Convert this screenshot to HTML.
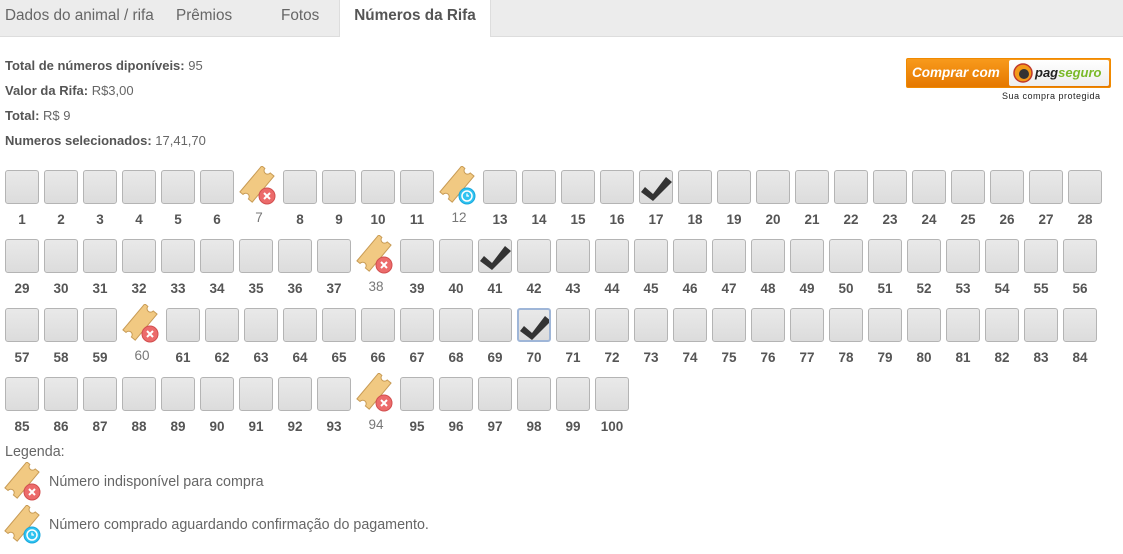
<!DOCTYPE html>
<html><head><meta charset="utf-8">
<style>
*{box-sizing:border-box;margin:0;padding:0}
body{width:1123px;height:554px;background:#fff;font-family:"Liberation Sans",Arial,sans-serif;color:#555;position:relative;overflow:hidden}
.tabs{position:absolute;left:0;top:0;width:1123px;height:37px;background:#ececec;border-bottom:1px solid #ddd}
.tab{position:absolute;top:0;height:36px;line-height:31px;font-size:15.3px;color:#666}
.tab.act{background:#fff;height:37px;border-left:1px solid #ddd;border-right:1px solid #ddd;font-weight:bold;color:#555}
.info{position:absolute;left:5px;font-size:13px;color:#666}
.info b{color:#555}
.row{position:absolute;left:5px;display:flex}
.c{width:39px;height:60px;position:relative}
.c .b{width:34px;height:34px;border:1px solid #b4b4b4;border-radius:3px;background:linear-gradient(#e9e9e9,#dcdcdc)}
.c .b.s{border:2px solid #9fb6d8}
.c span{position:absolute;left:0;width:34px;top:42px;text-align:center;font-weight:bold;font-size:13.5px;color:#555}
.t{width:44px;height:60px;position:relative}
.t svg{position:absolute;left:0;top:-4px}
.t span{position:absolute;left:0;width:40px;top:40px;text-align:center;font-size:13.5px;color:#777}
.leg{position:absolute;left:5px;font-size:14.3px;color:#666}
</style></head><body>
<svg width="0" height="0" style="position:absolute">
<defs>
<g id="tk"><g transform="rotate(-50 18 18)"><path d="M1 10 H35 V14 a3 3 0 0 0 0 7 V26 H1 V21 a3 3 0 0 0 0-7 Z" fill="#f1c982" stroke="#c89b55" stroke-width="1"/></g></g>
<g id="x"><circle cx="28" cy="30" r="8" fill="#ec6b6b" stroke="#d24f4f"/><path d="M25 27 L31 33 M31 27 L25 33" stroke="#fff" stroke-width="2"/></g>
<g id="k"><circle cx="28" cy="30" r="8" fill="#2fc3f0" stroke="#1aa8dd"/><circle cx="28" cy="30" r="5" fill="none" stroke="#fff" stroke-width="1.5"/><path d="M28 27.5 V30 H30" stroke="#fff" stroke-width="1.3" fill="none"/></g>
<g id="ck"><path d="M5 16 L13 23 L26 6 L32 11 L13 30 L1 21 Z" fill="#333"/></g>
</defs></svg>

<div class="tabs">
<div class="tab" style="left:5px">Dados do animal / rifa</div>
<div class="tab" style="left:176px">Prêmios</div>
<div class="tab" style="left:281px">Fotos</div>
<div class="tab act" style="left:339px;width:152px;text-align:center">Números da Rifa</div>
</div>

<div class="info" style="top:58px"><b>Total de números diponíveis:</b> 95</div>
<div class="info" style="top:83px"><b>Valor da Rifa:</b> R$3,00</div>
<div class="info" style="top:108px"><b>Total:</b> R$ 9</div>
<div class="info" style="top:133px"><b>Numeros selecionados:</b> 17,41,70</div>

<div style="position:absolute;left:906px;top:58px;width:205px;height:30px;border:1px solid #f08a00;border-radius:2px;background:linear-gradient(#f89a1c,#e57800)">
<div style="position:absolute;left:5px;top:6px;color:#fff;font-weight:bold;font-style:italic;font-size:13.5px">Comprar com</div>
<div style="position:absolute;left:102px;top:1px;width:100px;height:26px;background:linear-gradient(#fff,#eee);border-radius:2px">
<svg width="20" height="20" style="position:absolute;left:4px;top:3px"><circle cx="10" cy="10" r="9" fill="#f39a1a" stroke="#c0392b" stroke-width="1.5"/><circle cx="11" cy="11" r="5" fill="#333"/></svg>
<span style="position:absolute;left:26px;top:5px;font-size:13px;font-weight:bold;font-style:italic;color:#222">pag<span style="color:#7ab929">seguro</span></span></div>
</div>
<div style="position:absolute;left:1002px;top:91px;font-size:9px;color:#222;letter-spacing:0.5px">Sua compra protegida</div>

<div class="row" style="top:170px">
<div class="c"><div class="b"></div><span>1</span></div><div class="c"><div class="b"></div><span>2</span></div><div class="c"><div class="b"></div><span>3</span></div><div class="c"><div class="b"></div><span>4</span></div><div class="c"><div class="b"></div><span>5</span></div><div class="c"><div class="b"></div><span>6</span></div>
<div class="t"><svg width="40" height="40"><use href="#tk"/><use href="#x"/></svg><span>7</span></div>
<div class="c"><div class="b"></div><span>8</span></div><div class="c"><div class="b"></div><span>9</span></div><div class="c"><div class="b"></div><span>10</span></div><div class="c"><div class="b"></div><span>11</span></div>
<div class="t"><svg width="40" height="40"><use href="#tk"/><use href="#k"/></svg><span>12</span></div>
<div class="c"><div class="b"></div><span>13</span></div><div class="c"><div class="b"></div><span>14</span></div><div class="c"><div class="b"></div><span>15</span></div><div class="c"><div class="b"></div><span>16</span></div>
<div class="c"><div class="b"><svg width="32" height="32"><use href="#ck"/></svg></div><span>17</span></div>
<div class="c"><div class="b"></div><span>18</span></div><div class="c"><div class="b"></div><span>19</span></div><div class="c"><div class="b"></div><span>20</span></div><div class="c"><div class="b"></div><span>21</span></div><div class="c"><div class="b"></div><span>22</span></div><div class="c"><div class="b"></div><span>23</span></div><div class="c"><div class="b"></div><span>24</span></div><div class="c"><div class="b"></div><span>25</span></div><div class="c"><div class="b"></div><span>26</span></div><div class="c"><div class="b"></div><span>27</span></div><div class="c"><div class="b"></div><span>28</span></div>
</div>

<div class="row" style="top:239px">
<div class="c"><div class="b"></div><span>29</span></div><div class="c"><div class="b"></div><span>30</span></div><div class="c"><div class="b"></div><span>31</span></div><div class="c"><div class="b"></div><span>32</span></div><div class="c"><div class="b"></div><span>33</span></div><div class="c"><div class="b"></div><span>34</span></div><div class="c"><div class="b"></div><span>35</span></div><div class="c"><div class="b"></div><span>36</span></div><div class="c"><div class="b"></div><span>37</span></div>
<div class="t"><svg width="40" height="40"><use href="#tk"/><use href="#x"/></svg><span>38</span></div>
<div class="c"><div class="b"></div><span>39</span></div><div class="c"><div class="b"></div><span>40</span></div>
<div class="c"><div class="b"><svg width="32" height="32"><use href="#ck"/></svg></div><span>41</span></div>
<div class="c"><div class="b"></div><span>42</span></div><div class="c"><div class="b"></div><span>43</span></div><div class="c"><div class="b"></div><span>44</span></div><div class="c"><div class="b"></div><span>45</span></div><div class="c"><div class="b"></div><span>46</span></div><div class="c"><div class="b"></div><span>47</span></div><div class="c"><div class="b"></div><span>48</span></div><div class="c"><div class="b"></div><span>49</span></div><div class="c"><div class="b"></div><span>50</span></div><div class="c"><div class="b"></div><span>51</span></div><div class="c"><div class="b"></div><span>52</span></div><div class="c"><div class="b"></div><span>53</span></div><div class="c"><div class="b"></div><span>54</span></div><div class="c"><div class="b"></div><span>55</span></div><div class="c"><div class="b"></div><span>56</span></div>
</div>

<div class="row" style="top:308px">
<div class="c"><div class="b"></div><span>57</span></div><div class="c"><div class="b"></div><span>58</span></div><div class="c"><div class="b"></div><span>59</span></div>
<div class="t"><svg width="40" height="40"><use href="#tk"/><use href="#x"/></svg><span>60</span></div>
<div class="c"><div class="b"></div><span>61</span></div><div class="c"><div class="b"></div><span>62</span></div><div class="c"><div class="b"></div><span>63</span></div><div class="c"><div class="b"></div><span>64</span></div><div class="c"><div class="b"></div><span>65</span></div><div class="c"><div class="b"></div><span>66</span></div><div class="c"><div class="b"></div><span>67</span></div><div class="c"><div class="b"></div><span>68</span></div><div class="c"><div class="b"></div><span>69</span></div>
<div class="c"><div class="b s"><svg width="30" height="30"><use href="#ck"/></svg></div><span>70</span></div>
<div class="c"><div class="b"></div><span>71</span></div><div class="c"><div class="b"></div><span>72</span></div><div class="c"><div class="b"></div><span>73</span></div><div class="c"><div class="b"></div><span>74</span></div><div class="c"><div class="b"></div><span>75</span></div><div class="c"><div class="b"></div><span>76</span></div><div class="c"><div class="b"></div><span>77</span></div><div class="c"><div class="b"></div><span>78</span></div><div class="c"><div class="b"></div><span>79</span></div><div class="c"><div class="b"></div><span>80</span></div><div class="c"><div class="b"></div><span>81</span></div><div class="c"><div class="b"></div><span>82</span></div><div class="c"><div class="b"></div><span>83</span></div><div class="c"><div class="b"></div><span>84</span></div>
</div>

<div class="row" style="top:377px">
<div class="c"><div class="b"></div><span>85</span></div><div class="c"><div class="b"></div><span>86</span></div><div class="c"><div class="b"></div><span>87</span></div><div class="c"><div class="b"></div><span>88</span></div><div class="c"><div class="b"></div><span>89</span></div><div class="c"><div class="b"></div><span>90</span></div><div class="c"><div class="b"></div><span>91</span></div><div class="c"><div class="b"></div><span>92</span></div><div class="c"><div class="b"></div><span>93</span></div>
<div class="t"><svg width="40" height="40"><use href="#tk"/><use href="#x"/></svg><span>94</span></div>
<div class="c"><div class="b"></div><span>95</span></div><div class="c"><div class="b"></div><span>96</span></div><div class="c"><div class="b"></div><span>97</span></div><div class="c"><div class="b"></div><span>98</span></div><div class="c"><div class="b"></div><span>99</span></div><div class="c"><div class="b"></div><span>100</span></div>
</div>

<div class="leg" style="top:444px">Legenda:</div>
<svg width="40" height="40" style="position:absolute;left:4px;top:462px"><use href="#tk"/><use href="#x"/></svg>
<div class="leg" style="top:474px;left:49px">Número indisponível para compra</div>
<svg width="40" height="40" style="position:absolute;left:4px;top:505px"><use href="#tk"/><use href="#k"/></svg>
<div class="leg" style="top:517px;left:49px">Número comprado aguardando confirmação do pagamento.</div>
</body></html>
